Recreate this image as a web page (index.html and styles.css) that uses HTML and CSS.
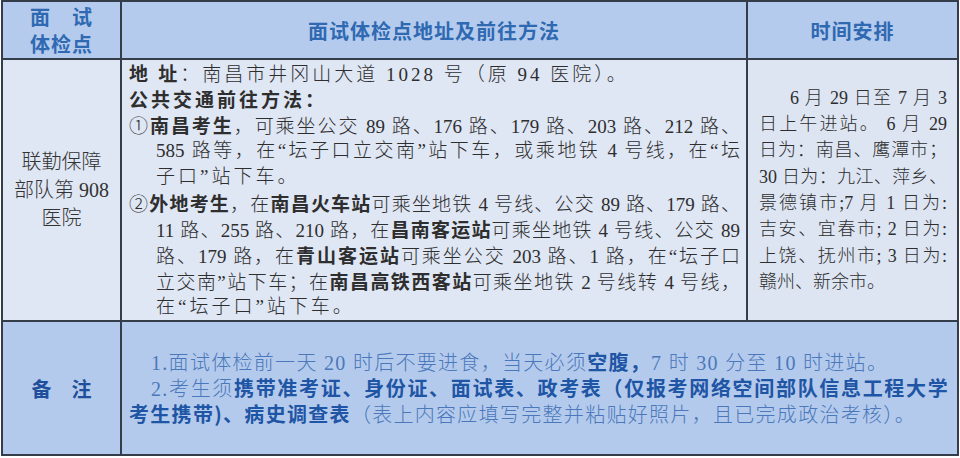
FILE: index.html
```html
<!DOCTYPE html>
<html lang="zh-CN">
<head>
<meta charset="utf-8">
<title>面试体检点</title>
<link rel="stylesheet" href="styles.css">
</head>
<body>
<table class="sheet">
  <colgroup>
    <col class="c1">
    <col class="c2">
    <col class="c3">
  </colgroup>
  <tr class="head">
    <th>面　试<br>体检点</th>
    <th>面试体检点地址及前往方法</th>
    <th>时间安排</th>
  </tr>
  <tr class="body">
    <td class="place">
      <span class="ln">联勤保障</span>
      <span class="ln">部队第 908</span>
      <span class="ln">医院</span>
    </td>
    <td class="route">
      <span class="ln"><b>地 址</b>：南昌市井冈山大道 1028 号（原 94 医院）。</span>
      <span class="ln"><b>公共交通前往方法：</b></span>
      <div class="item">
        <span class="ln j first">①<b>南昌考生</b>，可乘坐公交 89 路、176 路、179 路、203 路、212 路、</span>
        <span class="ln j">585 路等，在“坛子口立交南”站下车，或乘地铁 4 号线，在“坛</span>
        <span class="ln">子口”站下车。</span>
      </div>
      <div class="item">
        <span class="ln j first">②<b>外地考生</b>，在<b>南昌火车站</b>可乘坐地铁 4 号线、公交 89 路、179 路、</span>
        <span class="ln j">11 路、255 路、210 路，在<b>昌南客运站</b>可乘坐地铁 4 号线、公交 89</span>
        <span class="ln j">路、179 路，在<b>青山客运站</b>可乘坐公交 203 路、1 路，在“坛子口</span>
        <span class="ln j">立交南”站下车；在<b>南昌高铁西客站</b>可乘坐地铁 2 号线转 4 号线，</span>
        <span class="ln">在“坛子口”站下车。</span>
      </div>
    </td>
    <td class="time">
      <span class="ln j indent">6 月 29 日至 7 月 3</span>
      <span class="ln j">日上午进站。 6 月 29</span>
      <span class="ln j">日为：南昌、鹰潭市；</span>
      <span class="ln j">30 日为：九江、萍乡、</span>
      <span class="ln j">景德镇市;7 月 1 日为:</span>
      <span class="ln j">吉安、宜春市; 2 日为:</span>
      <span class="ln j">上饶、抚州市; 3 日为:</span>
      <span class="ln">赣州、新余市。</span>
    </td>
  </tr>
  <tr class="note">
    <th>备　注</th>
    <td colspan="2" class="remark">
      <span class="ln indent">1.面试体检前一天 20 时后不要进食，当天必须<b>空腹，</b>7 时 30 分至 10 时进站。</span>
      <span class="ln j indent">2.考生须<b>携带准考证、身份证、面试表、政考表（仅报考网络空间部队信息工程大学</b></span>
      <span class="ln"><b>考生携带)、病史调查表</b>（表上内容应填写完整并粘贴好照片，且已完成政治考核）。</span>
    </td>
  </tr>
</table>
</body>
</html>
```

FILE: styles.css
```css
html, body {
  margin: 0;
  padding: 0;
  background: #ffffff;
}

.sheet {
  border-collapse: collapse;
  table-layout: fixed;
  width: 956px;
  margin: 0 0 0 1px;
  font-family: "Liberation Serif", "Noto Sans CJK SC", serif;
  color: #2e2e2e;
}

.c1 { width: 119px; }
.c2 { width: 626px; }
.c3 { width: 211px; }

.sheet th,
.sheet td {
  border: 2px solid #363d4a;
  padding: 0;
  vertical-align: middle;
}

.head th {
  background: #b4cbee;
  color: #2f69b1;
  font-family: "Noto Sans CJK SC", sans-serif;
  font-weight: 700;
  font-size: 20px;
  line-height: 27px;
  letter-spacing: 1px;
  height: 56px;
  text-align: center;
}

.body td {
  background: #dfe6f4;
  height: 260px;
}

.ln {
  display: block;
  white-space: nowrap;
  overflow: visible;
}

.j {
  text-align: justify;
  text-align-last: justify;
}

.place {
  text-align: center;
  font-size: 20px;
  font-weight: 300;
  color: #333333;
}

.place .ln {
  height: 28px;
  line-height: 28px;
}

.route {
  padding: 0 6px 0 7px !important;
  font-size: 19px;
  font-weight: 300;
}

.route .ln {
  height: 26px;
  line-height: 26px;
  letter-spacing: 3px;
}

.route .j,
.route .j b {
  letter-spacing: 0;
}

.route b,
.remark b {
  font-family: "Noto Sans CJK SC", sans-serif;
  font-weight: 700;
}

.item {
  padding-left: 27px;
}

.item .first {
  margin-left: -27px;
}

.time {
  padding: 0 10px 0 11px !important;
  font-size: 18px;
  font-weight: 300;
  background: #dde5f3 !important;
}

.time .ln {
  height: 26.3px;
  line-height: 26.3px;
}

.time .indent {
  text-indent: 31px;
}

.note th,
.note td {
  background: #b4caec;
  height: 132px;
}

.note th {
  font-family: "Noto Sans CJK SC", sans-serif;
  font-weight: 700;
  font-size: 20px;
  color: #1f4f9a;
  text-align: center;
}

.remark {
  padding: 0 8px 0 7px !important;
  font-size: 20px;
  letter-spacing: 1.3px;
  color: #4a78ba;
  font-weight: 300;
}

.remark .ln {
  height: 26px;
  line-height: 26px;
}

.remark b {
  color: #1e55a5;
}

.remark .indent {
  text-indent: 22px;
}
```
